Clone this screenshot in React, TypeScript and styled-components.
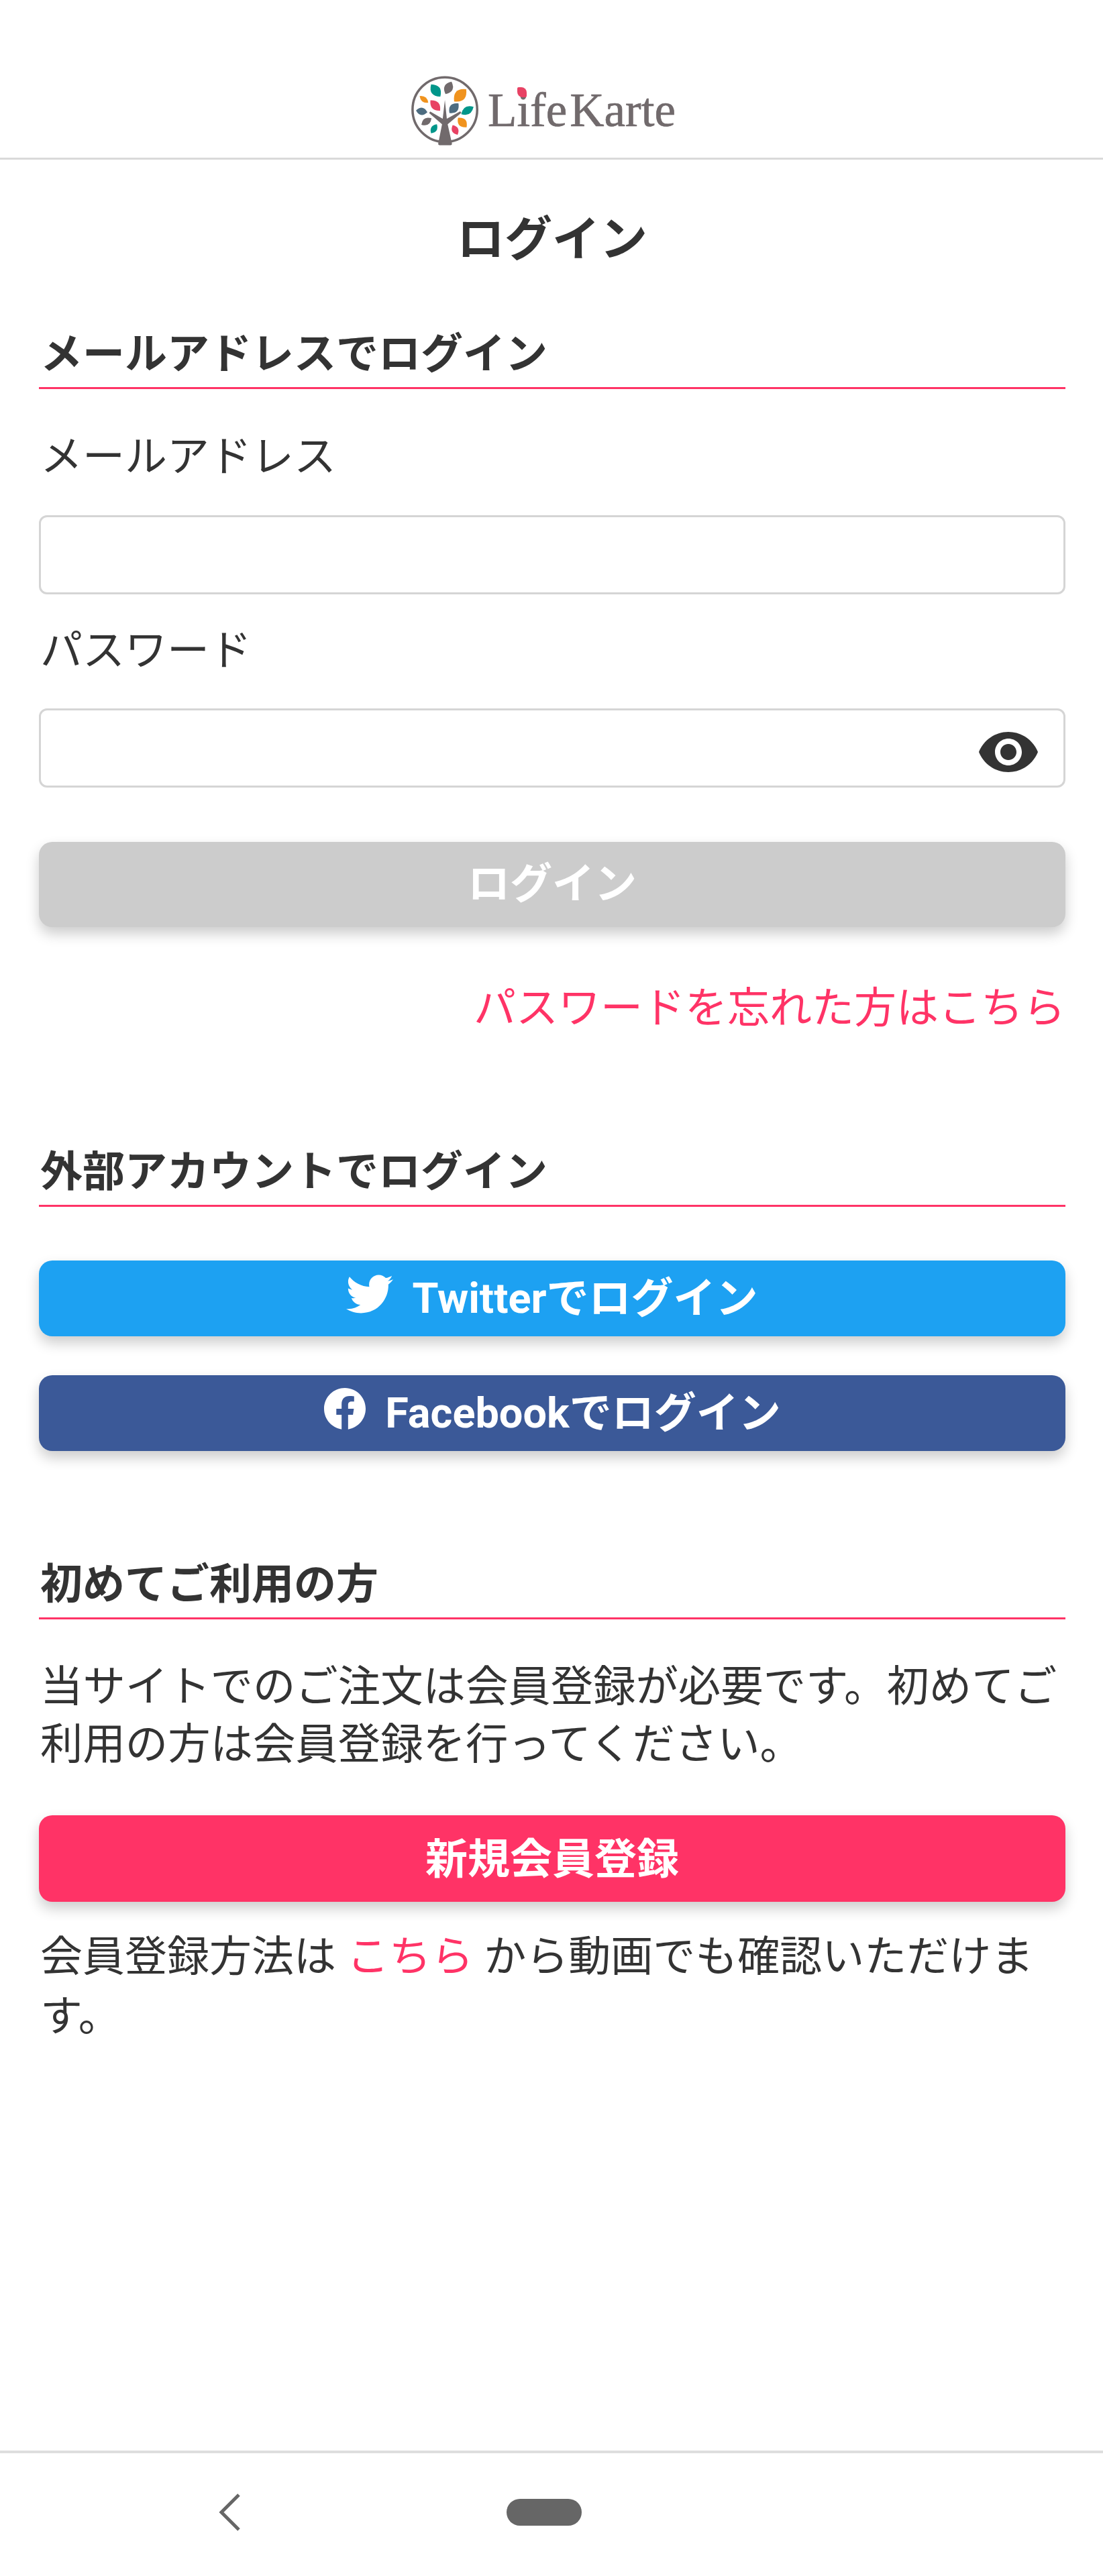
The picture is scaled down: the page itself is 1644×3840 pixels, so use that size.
import React from 'react'
import styled, { createGlobalStyle } from 'styled-components'
import { FaTwitter, FaFacebook } from 'react-icons/fa'
import { MdVisibility } from 'react-icons/md'

const GlobalStyle = createGlobalStyle`
    html, body {
        margin: 0;
        padding: 0;
        background: #fff;
    }
    * {
        box-sizing: border-box;
    }
`

// [tip x, tip y, tip x, tip y, bulge, colour], in the logo's own coordinates
const LEAVES: [number, number, number, number, number, string][] = [
    [245, 103, 288, 160, 44, '#00968a'],
    [340, 90, 312, 148, 40, '#716a6c'],
    [408, 125, 352, 182, 50, '#f0931e'],
    [192, 157, 232, 188, 24, '#f0931e'],
    [242, 177, 287, 225, 38, '#e84264'],
    [372, 191, 330, 236, 40, '#4d6c80'],
    [442, 207, 385, 241, 36, '#00968a'],
    [175, 224, 228, 232, 34, '#4d6c80'],
    [247, 260, 200, 290, 32, '#716a6c'],
    [370, 258, 410, 302, 38, '#f0931e'],
    [272, 288, 245, 330, 28, '#00968a'],
    [345, 292, 368, 337, 30, '#e84264'],
]

function leafPath([ax, ay, bx, by, bulge]: (typeof LEAVES)[number]): string {
    const mx = (ax + bx) / 2
    const my = (ay + by) / 2
    const len = Math.hypot(bx - ax, by - ay)
    const nx = ((by - ay) / len) * bulge
    const ny = (-(bx - ax) / len) * bulge
    return `M${ax} ${ay}Q${mx + nx} ${my + ny} ${bx} ${by}Q${mx - nx} ${my - ny} ${ax} ${ay}Z`
}

function LogoMark(): JSX.Element {
    return (
        <LogoSvg viewBox="150 60 330 330">
            <circle cx="309" cy="220" r="150" fill="none" stroke="#716a6c" strokeWidth="11" />
            <path
                d="M309 175 L318 262 L380 228 L386 234 L322 288 L342 378 Q342 385 335 385 L285 385 Q278 385 278 378 L296 288 L236 236 L241 229 L299 262 Z"
                fill="#716a6c"
            />
            {LEAVES.map((leaf, i) => (
                <path key={i} d={leafPath(leaf)} fill={leaf[5]} />
            ))}
        </LogoSvg>
    )
}

function Section(props: { title: string; children: React.ReactNode }): JSX.Element {
    return (
        <section>
            <SectionTitle>{props.title}</SectionTitle>
            {props.children}
        </section>
    )
}

export default function App(): JSX.Element {
    return (
        <Page>
            <GlobalStyle />
            <Header>
                <LogoMark />
                <LogoText>
                    L<LogoI>i<LogoDot /></LogoI>fe<LogoGap />Karte
                </LogoText>
            </Header>
            <Main>
                <PageTitle>ログイン</PageTitle>
                <Section title="メールアドレスでログイン">
                    <FieldLabel $first>メールアドレス</FieldLabel>
                    <InputBox />
                    <FieldLabel>パスワード</FieldLabel>
                    <InputBox>
                        <MdVisibility size={96} color="#333" />
                    </InputBox>
                    <SubmitButton>ログイン</SubmitButton>
                    <ForgotLink>パスワードを忘れた方はこちら</ForgotLink>
                </Section>
                <ExternalArea>
                    <Section title="外部アカウントでログイン">
                        <SocialButton $bg="#1da1f2" $first>
                            <FaTwitter size={70} />
                            <span>Twitterでログイン</span>
                        </SocialButton>
                        <SocialButton $bg="#3b5998">
                            <FaFacebook size={64} />
                            <span>Facebookでログイン</span>
                        </SocialButton>
                    </Section>
                </ExternalArea>
                <FirstTimeArea>
                    <Section title="初めてご利用の方">
                        <Paragraph>当サイトでのご注文は会員登録が必要です。初めてご利用の方は会員登録を行ってください。</Paragraph>
                        <RegisterButton>新規会員登録</RegisterButton>
                        <Note>
                            会員登録方法は <NoteLink>こちら</NoteLink> から動画でも確認いただけます。
                        </Note>
                    </Section>
                </FirstTimeArea>
            </Main>
            <NavBar>
                <svg width="33" height="56" viewBox="0 0 33 56">
                    <path d="M30 2 L4 28 L30 54" fill="none" stroke="#666" strokeWidth="5" />
                </svg>
                <HomePill />
            </NavBar>
        </Page>
    )
}

const Page = styled.div`
    min-height: 3840px;
    display: flex;
    flex-direction: column;
    background: #fff;
    color: #333;
    font-family: Roboto, 'Noto Sans CJK JP', sans-serif;
    font-size: 63px;
`

const Header = styled.header`
    height: 238px;
    padding: 112px 0 0 612px;
    display: flex;
    align-items: flex-start;
    gap: 9px;
    border-bottom: 3px solid #d9d9d9;
`

const LogoSvg = styled.svg`
    width: 106px;
    height: 106px;
    flex: none;
`

const LogoText = styled.div`
    font-family: 'Liberation Serif', serif;
    font-size: 71px;
    line-height: 71px;
    margin-top: 17px;
    color: #716a6c;
    white-space: nowrap;
    -webkit-text-stroke: 0.7px #716a6c;
`

const LogoI = styled.span`
    position: relative;
`

const LogoDot = styled.span`
    position: absolute;
    left: 1px;
    top: 5px;
    width: 14px;
    height: 15px;
    background: #e84264;
    border-radius: 2px 8px 2px 8px;
`

const LogoGap = styled.span`
    display: inline-block;
    width: 4px;
`

const Main = styled.main`
    padding: 0 56px 0 58px;
    flex: 1;
`

const PageTitle = styled.h1`
    margin: 69px 0 75px;
    font-size: 71px;
    line-height: 100px;
    font-weight: 700;
    text-align: center;
`

const SectionTitle = styled.h2`
    margin: 0;
    padding: 1px 0 4px 2px;
    font-size: 63px;
    line-height: 90px;
    font-weight: 700;
    border-bottom: 3px solid #ff3366;
`

const FieldLabel = styled.div<{ $first?: boolean }>`
    margin: ${(p) => (p.$first ? '56px 0 42px 2px' : '39px 0 41px 2px')};
    line-height: 90px;
`

const InputBox = styled.div`
    height: 118px;
    padding: 12px 34px 0 0;
    display: flex;
    align-items: center;
    justify-content: flex-end;
    border: 3px solid #d5d5d5;
    border-radius: 12px;
    background: #fff;
`

const ActionButton = styled.div`
    display: flex;
    align-items: center;
    justify-content: center;
    border-radius: 20px;
    color: #fff;
    font-weight: 700;
    box-shadow: 0 10px 20px rgba(0, 0, 0, 0.2);
`

const SubmitButton = styled(ActionButton)`
    height: 127px;
    padding-bottom: 14px;
    margin-top: 81px;
    background: #cccccc;
`

const ForgotLink = styled.div`
    margin: 76px 0 0;
    line-height: 90px;
    text-align: right;
    color: #ff3366;
`

const ExternalArea = styled.div`
    margin-top: 153px;
`

const SocialButton = styled(ActionButton)<{ $bg: string; $first?: boolean }>`
    height: 113px;
    padding-bottom: 13px;
    margin-top: ${(p) => (p.$first ? '80px' : '58px')};
    gap: 28px;
    background: ${(p) => p.$bg};
`

const FirstTimeArea = styled.div`
    margin-top: 153px;
`

const Paragraph = styled.p`
    margin: 57px 0 0 2px;
    font-size: 63.4px;
    line-height: 86px;
`

const RegisterButton = styled(ActionButton)`
    height: 129px;
    padding-bottom: 10px;
    margin-top: 63px;
    background: #ff3366;
`

const Note = styled.p`
    margin: 37px 0 0 2px;
    line-height: 89px;
`

const NoteLink = styled.span`
    color: #ff3366;
`

const NavBar = styled.nav`
    height: 187px;
    padding: 0 0 8px 326px;
    display: flex;
    align-items: center;
    gap: 396px;
    border-top: 4px solid #dedede;
`

const HomePill = styled.div`
    width: 112px;
    height: 40px;
    border-radius: 20px;
    background: #666;
`
